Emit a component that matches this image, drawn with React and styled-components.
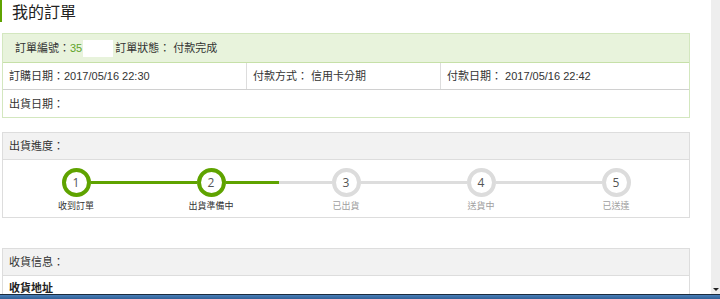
import React from "react";
import styled, { createGlobalStyle } from "styled-components";

const GlobalStyle = createGlobalStyle`
  html, body {
    margin: 0;
    padding: 0;
    background: #fff;
  }
  body {
    font-family: "Liberation Sans", "Noto Sans CJK TC", sans-serif;
    color: #333;
    font-size: 11px;
  }
`;

const Screen = styled.div`
  width: 720px;
  height: 299px;
  display: flex;
  flex-direction: column;
  overflow: hidden;
`;

const Window = styled.div`
  flex: 1;
  display: flex;
  min-height: 0;
`;

const Content = styled.div`
  flex: 1;
  padding-right: 21px;
  overflow: hidden;
`;

const Scrollbar = styled.div`
  width: 9px;
  background: #eeeeee;
  display: flex;
  flex-direction: column;
  justify-content: flex-end;
  align-items: center;
  padding-bottom: 3px;
  box-sizing: border-box;
`;

const ArrowDown = styled.div`
  width: 0;
  height: 0;
  border-left: 3px solid transparent;
  border-right: 3px solid transparent;
  border-top: 3px solid #222;
`;

const Taskbar = styled.div`
  height: 5px;
  border-top: 1px solid #1c2b3d;
  background: linear-gradient(#4a7fb8, #2f5f96);
  box-sizing: border-box;
`;

const Title = styled.h1`
  margin: 0 0 11px;
  border-left: 2px solid #5fa300;
  padding: 0 0 0 10px;
  font-size: 16px;
  line-height: 22px;
  font-weight: normal;
  color: #222;
  font-family: "Noto Sans CJK TC", sans-serif;
`;

const Box = styled.div`
  margin-left: 2px;
  border: 1px solid ${p => (p.$green ? "#d3e7bf" : "#dddddd")};
  margin-bottom: ${p => p.$gap || 0}px;
`;

const BoxHead = styled.div`
  height: ${p => p.$h || 27}px;
  display: flex;
  align-items: center;
  padding-left: ${p => p.$pad || 6}px;
  background: ${p => (p.$green ? "#e8f3dc" : "#f2f2f2")};
  border-bottom: 1px solid ${p => (p.$green ? "#c6e0a8" : "#dddddd")};
  box-sizing: border-box;
  line-height: 14px;
`;

const Green = styled.span`
  color: #5fa32a;
`;

const Masked = styled.span`
  display: inline-block;
  width: 30px;
  height: 17px;
  background: #fff;
  margin: 0 2px 0 1px;
`;

const InfoRow = styled.div`
  display: grid;
  grid-template-columns: ${p => p.$cols || "1fr"};
  height: 27px;
  border-bottom: ${p => (p.$last ? "none" : "1px solid #d0d0d0")};
  box-sizing: border-box;
`;

const Cell = styled.div`
  display: flex;
  align-items: center;
  padding-left: 6px;
  border-left: ${p => (p.$first ? "none" : "1px solid #dddddd")};
  line-height: 14px;
`;

const Steps = styled.div`
  display: grid;
  grid-template-columns: repeat(5, 1fr);
  padding: 8px 5.5px 6px;
`;

const Step = styled.div`
  display: flex;
  flex-direction: column;
  align-items: center;
`;

const Track = styled.div`
  width: 100%;
  display: flex;
  align-items: center;
`;

const Segment = styled.div`
  flex: 1;
  height: 3px;
  background: ${p => (p.$off ? "transparent" : p.$done ? "#5fa300" : "#dddddd")};
`;

const Circle = styled.div`
  width: 29px;
  height: 29px;
  flex: none;
  box-sizing: border-box;
  border-radius: 50%;
  border: 4px solid ${p => (p.$done ? "#5fa300" : "#dcdcdc")};
  display: flex;
  align-items: center;
  justify-content: center;
  font-family: "Open Sans", sans-serif;
  font-size: 12px;
  color: #555;
  background: #fff;
`;

const StepLabel = styled.div`
  margin-top: 4px;
  font-size: 9px;
  line-height: 10px;
  color: ${p => (p.$done ? "#333" : "#a0a0a0")};
`;

const AddressRow = styled.div`
  padding: 5px 6px 0;
  font-weight: bold;
  color: #222;
  line-height: 14px;
`;

const steps = [
  { n: 1, label: "收到訂單", done: true },
  { n: 2, label: "出貨準備中", done: true },
  { n: 3, label: "已出貨" },
  { n: 4, label: "送貨中" },
  { n: 5, label: "已送達" },
];

export default function App() {
  return (
    <Screen>
      <GlobalStyle />
      <Window>
        <Content>
          <Title>我的訂單</Title>

          <Box $green $gap={14}>
            <BoxHead $green $h={29} $pad={12}>
              訂單編號：<Green>35</Green>
              <Masked />
              訂單狀態： 付款完成
            </BoxHead>
            <InfoRow $cols="243px 194px 1fr">
              <Cell $first>訂購日期：2017/05/16 22:30</Cell>
              <Cell>付款方式： 信用卡分期</Cell>
              <Cell>付款日期： 2017/05/16 22:42</Cell>
            </InfoRow>
            <InfoRow $last>
              <Cell $first>出貨日期：</Cell>
            </InfoRow>
          </Box>

          <Box $gap={30}>
            <BoxHead>出貨進度：</BoxHead>
            <Steps>
              {steps.map((s, i) => (
                <Step key={s.n}>
                  <Track>
                    <Segment $off={i === 0} $done={s.done} />
                    <Circle $done={s.done}>{s.n}</Circle>
                    <Segment $off={i === steps.length - 1} $done={s.done} />
                  </Track>
                  <StepLabel $done={s.done}>{s.label}</StepLabel>
                </Step>
              ))}
            </Steps>
          </Box>

          <Box>
            <BoxHead>收貨信息：</BoxHead>
            <AddressRow>收貨地址</AddressRow>
          </Box>
        </Content>
        <Scrollbar>
          <ArrowDown />
        </Scrollbar>
      </Window>
      <Taskbar />
    </Screen>
  );
}
